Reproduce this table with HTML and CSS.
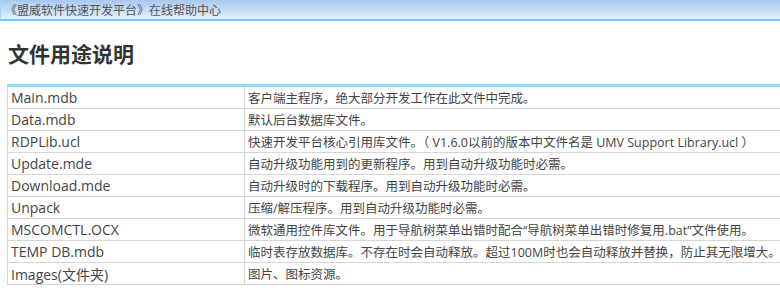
FILE: index.html
```html
<!DOCTYPE html>
<html lang="zh">
<head>
<meta charset="utf-8">
<link rel="stylesheet" href="styles.css">
</head>
<body>
<div class="topbar">《盟威软件快速开发平台》在线帮助中心</div>
<h1 class="title">文件用途说明</h1>
<table class="files">
<tr><td class="name">Main.mdb</td><td class="desc">客户端主程序，绝大部分开发工作在此文件中完成。</td></tr>
<tr><td class="name">Data.mdb</td><td class="desc">默认后台数据库文件。</td></tr>
<tr><td class="name">RDPLib.ucl</td><td class="desc">快速开发平台核心引用库文件。（ V1.6.0以前的版本中文件名是 UMV Support Library.ucl ）</td></tr>
<tr><td class="name">Update.mde</td><td class="desc">自动升级功能用到的更新程序。用到自动升级功能时必需。</td></tr>
<tr><td class="name">Download.mde</td><td class="desc">自动升级时的下载程序。用到自动升级功能时必需。</td></tr>
<tr><td class="name">Unpack</td><td class="desc">压缩/解压程序。用到自动升级功能时必需。</td></tr>
<tr><td class="name">MSCOMCTL.OCX</td><td class="desc">微软通用控件库文件。用于导航树菜单出错时配合“导航树菜单出错时修复用.bat”文件使用。</td></tr>
<tr><td class="name">TEMP DB.mdb</td><td class="desc">临时表存放数据库。不存在时会自动释放。超过100M时也会自动释放并替换，防止其无限增大。</td></tr>
<tr><td class="name">Images(文件夹)</td><td class="desc">图片、图标资源。</td></tr>
</table>
</body>
</html>
```
FILE: styles.css
```css
html, body {
  margin: 0;
  padding: 0;
  background: #fff;
  overflow: hidden;
}
body {
  font-family: "Open Sans", "Noto Sans CJK SC", sans-serif;
  color: #333;
}
.topbar {
  height: 19px;
  line-height: 19px;
  padding-left: 4px;
  font-size: 12px;
  color: #555;
  font-family: "Noto Sans CJK SC", sans-serif;
  background: linear-gradient(#a9c8ef, #e6f0fb);
  border-bottom: 2px solid #6fc6f2;
  border-left: 1px solid #9fd6f5;
  white-space: nowrap;
}
.title {
  margin: 18px 0 0 8px;
  height: 45px;
  font-size: 21px;
  line-height: 28px;
  font-weight: bold;
  color: #333;
  font-family: "Noto Sans CJK SC", sans-serif;
}
.files {
  margin-left: 7px;
  width: 800px;
  border-collapse: collapse;
  border-top: 3px solid #8fd8f8;
  white-space: nowrap;
}
.files td {
  border: 1px solid #d6d6d6;
  height: 21px;
  padding: 0 3px;
  vertical-align: middle;
}
.files .name {
  width: 230px;
  font-size: 14px;
  color: #444;
}
.files .desc {
  font-size: 12.5px;
  color: #444;
}
```
